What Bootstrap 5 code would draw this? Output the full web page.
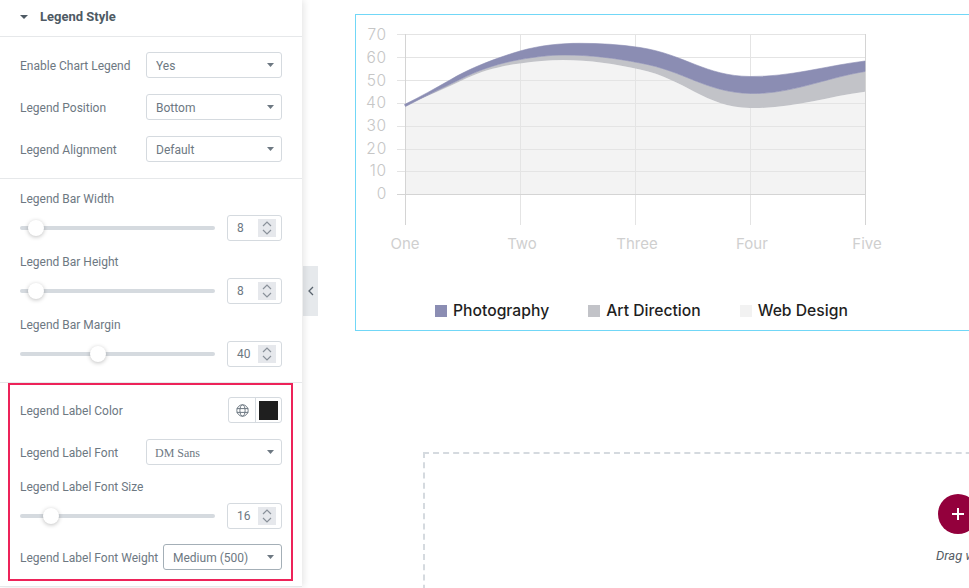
<!DOCTYPE html>
<html lang="en">
<head>
  <meta charset="UTF-8">
  <meta name="viewport" content="width=device-width, initial-scale=1">
  <title>Legend Style</title>
  <link href="https://cdn.jsdelivr.net/npm/bootstrap@5.3.0/dist/css/bootstrap.min.css" rel="stylesheet">
  <style>
    html, body { height: 100%; overflow: hidden; }
    body { font-family: Roboto, "Liberation Sans", sans-serif; font-size: 12px; color: #6d7882; background: #fff; }

    /* panel on the left */
    .side-panel { width: 302px; height: 587px; flex: none; background: #fff; box-shadow: 2px 0 7px rgba(0,0,0,.1); border-bottom: 1px solid #e6e8ea; position: relative; z-index: 1; }
    .panel-head { height: 37px; padding: 0 0 2px 20px; gap: 12px; border-bottom: 1px solid #e6e8ea; color: #4e5a64; font-size: 13px; font-weight: 700; }
    .caret-down { width: 0; height: 0; border: 4px solid transparent; border-top-color: #4e5a64; border-bottom: 0; }
    .group-a { padding: 15px 20px 16px; border-bottom: 1px solid #e6e8ea; gap: 16px; }
    .group-b { padding: 12px 20px 15px; border-bottom: 1px solid #e6e8ea; }
    .group-c { margin: 0 9px 5px 8px; padding: 12px 9px 9px 10px; border: 2px solid #ed2359; }
    .ctl-row { height: 26px; }
    .ctl-row > span:first-child { padding-top: 2px; }
    .ctl-label { line-height: 16px; height: 16px; margin-bottom: 8px; }
    .ctl-label.size-label { margin: 14px 0 8px; }
    .slider-row { height: 26px; margin-bottom: 13px; }
    .slider-row.last-row { margin-bottom: 0; }
    .slider-row.size-row { margin-bottom: 15px; }

    .ctl-select { width: 136px; height: 26px; min-height: 0; padding: 2px 20px 0 9px; font-size: 12px; line-height: 22px; color: #6d7882; border: 1px solid #d5dadf; border-radius: 3px; background-size: 7px 4px; background-position: right 7px center;
      background-image: url("data:image/svg+xml,%3Csvg xmlns='http://www.w3.org/2000/svg' viewBox='0 0 7 4'%3E%3Cpath fill='%236d7882' d='M0 0h7L3.500 4z'/%3E%3C/svg%3E"); }
    .ctl-select.serif-font { padding-left: 8px; font-family: "Liberation Serif", serif; }
    .ctl-select.focused-select { width: 119px; border-color: #a4afb7; }

    .slider-range { width: 195px; height: 16px; }
    .slider-range::-webkit-slider-runnable-track { height: 4px; background: #d5dadf; border-radius: 2px; }
    .slider-range::-webkit-slider-thumb { width: 16px; height: 16px; margin-top: -6px; background: #fff; border: 0; border-radius: 50%; box-shadow: 0 1px 4px rgba(0,0,0,.25); -webkit-appearance: none; appearance: none; }

    .num-box { width: 55px; height: 26px; padding: 0 5px 0 9px; border: 1px solid #d5dadf; border-radius: 3px; font-size: 12px; color: #6d7882; }
    .spin-box { width: 18px; height: 18px; background: #e6e8ec; }

    .color-btns { width: 54px; height: 26px; border: 1px solid #d5dadf; border-radius: 3px; }
    .globe-part { width: 27px; height: 100%; border-right: 1px solid #d5dadf; }
    .swatch-part { flex: 1; }
    .color-chip { width: 19px; height: 19px; background: #1f1f1f; }

    /* preview on the right */
    .preview-area { min-width: 0; padding: 14px 0 0 53px; overflow: hidden; position: relative; }
    .chart-box { width: 700px; height: 317px; border: 1px solid #71d7f7; }
    .chart-svg { display: block; width: 698px; height: 280px; }
    .y-txt { font-family: Inter, sans-serif; font-size: 15.5px; font-weight: 300; letter-spacing: .8px; fill: #c6c6c6; text-anchor: end; }
    .x-txt { font-family: Inter, sans-serif; font-size: 15px; font-weight: 400; fill: #cfcfcf; text-anchor: middle; }
    .chart-legend { padding: 6px 0 0 79px; gap: 39px; font-family: Inter, sans-serif; font-size: 15.7px; font-weight: 500; color: #1f1f1f; line-height: 20px; }
    .legend-key { width: 12px; height: 12px; margin-right: 6px; }
    .key-a { background: #8b8db3; }
    .key-b { background: #c2c3c8; }
    .key-c { background: #f2f2f2; }

    .drop-zone { width: 800px; height: 200px; margin: 121px 0 0 68px; padding: 40px 0 0 513px; border: 2px dashed #d5dadf; border-bottom: 0; }
    .add-btn { width: 40px; height: 40px; background: #93003c; }
    .drag-txt { margin: 15px 0 0 -2px; font-size: 13px; font-style: italic; color: #555d65; white-space: nowrap; line-height: 14px; }

    .collapse-tab { position: absolute; left: 1px; top: 266px; width: 15px; height: 50px; background: #e6e9ec; }
  </style>
</head>
<body class="d-flex">

<!-- settings -->
<div class="side-panel d-flex flex-column">
  <div class="panel-head d-flex align-items-center">
    <span class="caret-down"></span>
    <span>Legend Style</span>
  </div>

  <div class="group-a d-flex flex-column">
    <div class="ctl-row d-flex align-items-center justify-content-between">
      <span>Enable Chart Legend</span>
      <select class="form-select ctl-select"><option>Yes</option></select>
    </div>
    <div class="ctl-row d-flex align-items-center justify-content-between">
      <span>Legend Position</span>
      <select class="form-select ctl-select"><option>Bottom</option></select>
    </div>
    <div class="ctl-row d-flex align-items-center justify-content-between">
      <span>Legend Alignment</span>
      <select class="form-select ctl-select"><option>Default</option></select>
    </div>
  </div>

  <div class="group-b">
    <div class="ctl-label">Legend Bar Width</div>
    <div class="slider-row d-flex align-items-center justify-content-between">
      <input type="range" class="form-range slider-range" min="0" max="179" value="8">
      <div class="num-box d-flex align-items-center justify-content-between">8
        <span class="spin-box d-flex align-items-center justify-content-center"><svg width="10" height="14" viewBox="0 0 10 14"><path d="M1 5l4-4 4 4M1 9l4 4 4-4" fill="none" stroke="#8a919a" stroke-width="1.2"/></svg></span>
      </div>
    </div>
    <div class="ctl-label">Legend Bar Height</div>
    <div class="slider-row d-flex align-items-center justify-content-between">
      <input type="range" class="form-range slider-range" min="0" max="179" value="8">
      <div class="num-box d-flex align-items-center justify-content-between">8
        <span class="spin-box d-flex align-items-center justify-content-center"><svg width="10" height="14" viewBox="0 0 10 14"><path d="M1 5l4-4 4 4M1 9l4 4 4-4" fill="none" stroke="#8a919a" stroke-width="1.2"/></svg></span>
      </div>
    </div>
    <div class="ctl-label">Legend Bar Margin</div>
    <div class="slider-row last-row d-flex align-items-center justify-content-between">
      <input type="range" class="form-range slider-range" min="0" max="102" value="40">
      <div class="num-box d-flex align-items-center justify-content-between">40
        <span class="spin-box d-flex align-items-center justify-content-center"><svg width="10" height="14" viewBox="0 0 10 14"><path d="M1 5l4-4 4 4M1 9l4 4 4-4" fill="none" stroke="#8a919a" stroke-width="1.2"/></svg></span>
      </div>
    </div>
  </div>

  <div class="group-c">
    <div class="ctl-row d-flex align-items-center justify-content-between mb-3">
      <span>Legend Label Color</span>
      <div class="color-btns d-flex align-items-center">
        <span class="globe-part d-flex align-items-center justify-content-center">
          <svg width="13" height="13" viewBox="0 0 13 13" fill="none" stroke="#6d7882" stroke-width="1"><circle cx="6.5" cy="6.5" r="5.7"/><ellipse cx="6.5" cy="6.5" rx="2.6" ry="5.7"/><path d="M.8 4.6h11.4M.8 8.4h11.4"/></svg>
        </span>
        <span class="swatch-part d-flex align-items-center justify-content-center"><span class="color-chip"></span></span>
      </div>
    </div>
    <div class="ctl-row d-flex align-items-center justify-content-between">
      <span>Legend Label Font</span>
      <select class="form-select ctl-select serif-font"><option>DM Sans</option></select>
    </div>
    <div class="ctl-label size-label">Legend Label Font Size</div>
    <div class="slider-row size-row d-flex align-items-center justify-content-between">
      <input type="range" class="form-range slider-range" min="0" max="125" value="16">
      <div class="num-box d-flex align-items-center justify-content-between">16
        <span class="spin-box d-flex align-items-center justify-content-center"><svg width="10" height="14" viewBox="0 0 10 14"><path d="M1 5l4-4 4 4M1 9l4 4 4-4" fill="none" stroke="#8a919a" stroke-width="1.2"/></svg></span>
      </div>
    </div>
    <div class="ctl-row d-flex align-items-center justify-content-between">
      <span>Legend Label Font Weight</span>
      <select class="form-select ctl-select focused-select"><option>Medium (500)</option></select>
    </div>
  </div>
</div>

<!-- preview -->
<div class="preview-area flex-grow-1">
  <div class="collapse-tab d-flex align-items-center justify-content-center">
    <svg width="6" height="10" viewBox="0 0 6 10"><path d="M5 1L1 5l4 4" fill="none" stroke="#59636d" stroke-width="1.3"/></svg>
  </div>

  <div class="chart-box">
    <svg class="chart-svg" viewBox="356 15 698 280">
      <!-- light series -->
      <path fill="#f3f3f3" d="M405 105.500 C425 97 447 88 467 78 C482 71 500 66 520 63.500 C535 61.500 548 60 563 60 C590 60 615 64 640 69.500 C685 79 705 107 750 108 C790 109 825 97 865 91.700 V194 H405 Z"/>
      <g stroke="#e4e4e4" stroke-width="1">
        <path d="M397 34.500H865.500M397 57.500H865.500M397 80.500H865.500M397 103.500H865.500M397 126.500H865.500M397 149.500H865.500M397 171.500H865.500"/>
        <path d="M520.500 34V225M635.500 34V225M750.500 34V225"/>
      </g>
      <path d="M397 194.500H865.500M405.500 34V225M865.500 34V225" stroke="#d4d4d4" stroke-width="1" fill="none"/>
      <!-- art direction -->
      <path fill="#c2c3c8" d="M405 105.500 C425 96 447 86 467 76 C482 69 500 63 520 59.500 C535 57 548 55 565 55 C590 55 615 58 640 63 C685 71 705 92 750 93.500 C790 94.500 825 78 865 71.500 V91.700 C825 97 790 109 750 108 C705 107 685 79 640 69.500 C615 64 590 60 563 60 C548 60 535 61.500 520 63.500 C500 66 482 71 467 78 C447 88 425 97 405 105.500 Z"/>
      <!-- photography -->
      <path fill="#8b8db3" stroke="#8b8db3" stroke-width=".6" d="M404.500 104.500 C420 97 435 88.500 450 80 C470 68 495 58.500 520 51 C540 45.400 560 43.300 580 43.300 C600 43.300 620 44.500 640 47.500 C685 54.500 705 76 750 76.500 C790 77 825 66 865 61 V71.500 C825 78 790 94.500 750 93.500 C705 92 685 71 640 63 C615 58 590 55 565 55 C548 55 535 57 520 59.500 C500 63 482 69 467 76 C447 86 425 96 405.500 106.500 Z"/>
      <text class="y-txt" x="387" y="40">70</text>
      <text class="y-txt" x="387" y="63">60</text>
      <text class="y-txt" x="387" y="86">50</text>
      <text class="y-txt" x="387" y="108">40</text>
      <text class="y-txt" x="387" y="131">30</text>
      <text class="y-txt" x="387" y="154">20</text>
      <text class="y-txt" x="387" y="176">10</text>
      <text class="y-txt" x="387" y="199">0</text>
      <text class="x-txt" x="405" y="249">One</text>
      <text class="x-txt" x="522" y="249">Two</text>
      <text class="x-txt" x="637" y="249">Three</text>
      <text class="x-txt" x="752" y="249">Four</text>
      <text class="x-txt" x="867" y="249">Five</text>
    </svg>
    <div class="chart-legend d-flex">
      <span class="d-flex align-items-center"><span class="legend-key key-a"></span>Photography</span>
      <span class="d-flex align-items-center"><span class="legend-key key-b"></span>Art Direction</span>
      <span class="d-flex align-items-center"><span class="legend-key key-c"></span>Web Design</span>
    </div>
  </div>

  <div class="drop-zone">
    <div class="add-btn rounded-circle d-flex align-items-center justify-content-center">
      <svg width="14" height="14" viewBox="0 0 14 14"><path d="M7 1v12M1 7h12" stroke="#fff" stroke-width="2"/></svg>
    </div>
    <div class="drag-txt">Drag widget here</div>
  </div>
</div>

<script src="https://cdn.jsdelivr.net/npm/bootstrap@5.3.0/dist/js/bootstrap.bundle.min.js"></script>
</body>
</html>
